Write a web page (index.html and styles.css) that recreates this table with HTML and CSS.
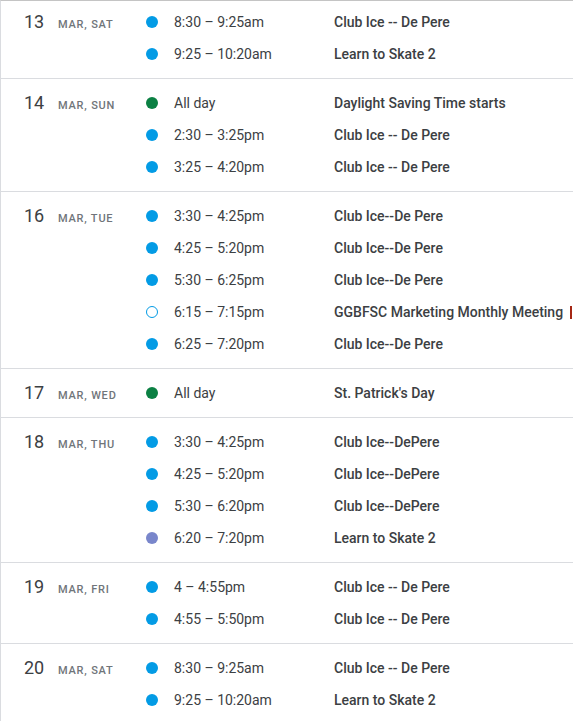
FILE: index.html
```html
<!DOCTYPE html>
<html>
<head>
<meta charset="utf-8">
<link rel="stylesheet" href="styles.css">
</head>
<body>
<div class="agenda">
  <div class="day first">
    <div class="date"><span class="num">13</span><span class="mon">Mar, Sat</span></div>
    <div class="events">
      <div class="ev"><span class="dot blue"></span><span class="time">8:30 – 9:25am</span><span class="title">Club Ice -- De Pere</span></div>
      <div class="ev"><span class="dot blue"></span><span class="time">9:25 – 10:20am</span><span class="title">Learn to Skate 2</span></div>
    </div>
  </div>
  <div class="day">
    <div class="date"><span class="num">14</span><span class="mon">Mar, Sun</span></div>
    <div class="events">
      <div class="ev"><span class="dot green"></span><span class="time">All day</span><span class="title">Daylight Saving Time starts</span></div>
      <div class="ev"><span class="dot blue"></span><span class="time">2:30 – 3:25pm</span><span class="title">Club Ice -- De Pere</span></div>
      <div class="ev"><span class="dot blue"></span><span class="time">3:25 – 4:20pm</span><span class="title">Club Ice -- De Pere</span></div>
    </div>
  </div>
  <div class="day">
    <div class="date"><span class="num">16</span><span class="mon">Mar, Tue</span></div>
    <div class="events">
      <div class="ev"><span class="dot blue"></span><span class="time">3:30 – 4:25pm</span><span class="title">Club Ice--De Pere</span></div>
      <div class="ev"><span class="dot blue"></span><span class="time">4:25 – 5:20pm</span><span class="title">Club Ice--De Pere</span></div>
      <div class="ev"><span class="dot blue"></span><span class="time">5:30 – 6:25pm</span><span class="title">Club Ice--De Pere</span></div>
      <div class="ev"><span class="dot hollow"></span><span class="time">6:15 – 7:15pm</span><span class="title">GGBFSC Marketing Monthly Meeting</span><span class="tag"></span></div>
      <div class="ev"><span class="dot blue"></span><span class="time">6:25 – 7:20pm</span><span class="title">Club Ice--De Pere</span></div>
    </div>
  </div>
  <div class="day">
    <div class="date"><span class="num">17</span><span class="mon">Mar, Wed</span></div>
    <div class="events">
      <div class="ev"><span class="dot green"></span><span class="time">All day</span><span class="title">St. Patrick's Day</span></div>
    </div>
  </div>
  <div class="day">
    <div class="date"><span class="num">18</span><span class="mon">Mar, Thu</span></div>
    <div class="events">
      <div class="ev"><span class="dot blue"></span><span class="time">3:30 – 4:25pm</span><span class="title">Club Ice--DePere</span></div>
      <div class="ev"><span class="dot blue"></span><span class="time">4:25 – 5:20pm</span><span class="title">Club Ice--DePere</span></div>
      <div class="ev"><span class="dot blue"></span><span class="time">5:30 – 6:20pm</span><span class="title">Club Ice--DePere</span></div>
      <div class="ev"><span class="dot purple"></span><span class="time">6:20 – 7:20pm</span><span class="title">Learn to Skate 2</span></div>
    </div>
  </div>
  <div class="day">
    <div class="date"><span class="num">19</span><span class="mon">Mar, Fri</span></div>
    <div class="events">
      <div class="ev"><span class="dot blue"></span><span class="time">4 – 4:55pm</span><span class="title">Club Ice -- De Pere</span></div>
      <div class="ev"><span class="dot blue"></span><span class="time">4:55 – 5:50pm</span><span class="title">Club Ice -- De Pere</span></div>
    </div>
  </div>
  <div class="day">
    <div class="date"><span class="num">20</span><span class="mon">Mar, Sat</span></div>
    <div class="events">
      <div class="ev"><span class="dot blue"></span><span class="time">8:30 – 9:25am</span><span class="title">Club Ice -- De Pere</span></div>
      <div class="ev"><span class="dot blue"></span><span class="time">9:25 – 10:20am</span><span class="title">Learn to Skate 2</span></div>
    </div>
  </div>
</div>
</body>
</html>
```

FILE: styles.css
```css
html, body {
  margin: 0;
  padding: 0;
  background: #fff;
  overflow: hidden;
}
.agenda {
  width: 573px;
  height: 721px;
  box-sizing: border-box;
  border-top: 1px solid #c4c4c4;
  border-left: 1px solid #dadce0;
  overflow: hidden;
  font-family: Roboto, "Liberation Sans", sans-serif;
  color: #3c4043;
}
.day {
  display: flex;
  padding: 8px 0;
  border-bottom: 1px solid #dadce0;
}
.day.first {
  padding-top: 5px;
}
.date {
  width: 145px;
  flex: none;
  box-sizing: border-box;
  padding-left: 23px;
  display: flex;
  align-items: baseline;
  height: 32px;
  padding-top: 2px;
}
.num {
  width: 34px;
  font-size: 18px;
  line-height: 28px;
  color: #3c4043;
}
.mon {
  font-size: 11px;
  font-weight: 500;
  letter-spacing: 0.8px;
  text-transform: uppercase;
  color: #70757a;
}
.events {
  flex: 1;
  min-width: 0;
}
.ev {
  display: flex;
  align-items: center;
  height: 32px;
  white-space: nowrap;
  font-size: 14px;
}
.dot {
  width: 12px;
  height: 12px;
  border-radius: 50%;
  box-sizing: border-box;
  flex: none;
  margin-right: 16px;
}
.blue { background: #039be5; }
.green { background: #0b8043; }
.purple { background: #7986cb; }
.hollow { border: 1.5px solid #039be5; background: #fff; }
.time {
  width: 160px;
  flex: none;
  color: #3c4043;
}
.title {
  font-weight: 500;
  color: #3c4043;
}
.tag {
  flex: none;
  margin-left: 7px;
  width: 2px;
  height: 13px;
  background: #a52714;
}
```
